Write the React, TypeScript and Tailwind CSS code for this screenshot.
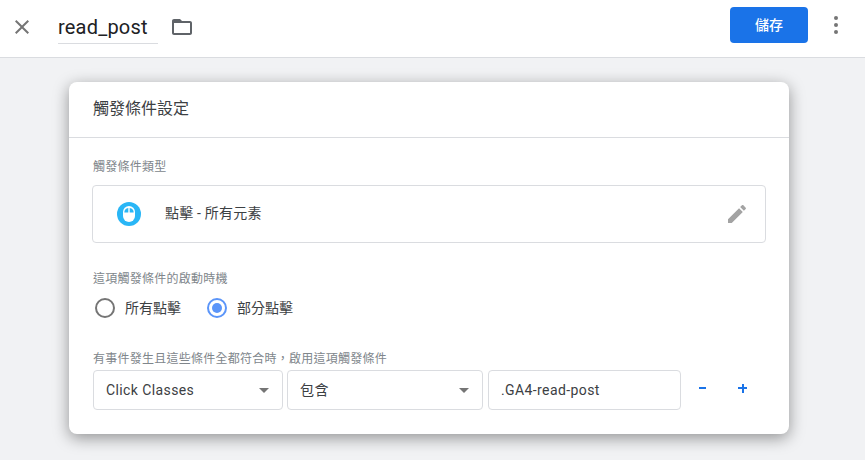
const font = { fontFamily: 'Roboto, "Noto Sans CJK TC", sans-serif' }

function Caret() {
  return <span className="w-0 h-0 border-x-[5px] border-x-transparent border-t-[5px] border-t-[#757575]" />
}

function SelectBox({ label, width }: { label: string; width: string }) {
  return (
    <div className={`${width} h-10 flex items-center justify-between pl-3 pr-[13px] bg-white border border-[#dadce0] rounded text-sm text-[#3c4043] tracking-[0.4px]`}>
      <span>{label}</span>
      <Caret />
    </div>
  )
}

function Radio({ label, checked }: { label: string; checked?: boolean }) {
  return (
    <div className="flex items-center gap-[10px]">
      <span className={`w-5 h-5 rounded-full border-2 flex items-center justify-center ${checked ? 'border-[#5b95f9]' : 'border-[#757575]'}`}>
        {checked && <span className="w-2.5 h-2.5 rounded-full bg-[#5b95f9]" />}
      </span>
      <span className="text-sm text-[#3c4043]">{label}</span>
    </div>
  )
}

export default function App() {
  return (
    <div className="w-[865px] h-[460px] overflow-hidden flex flex-col bg-[#f1f2f4]" style={font}>
      {/* Top bar */}
      <div className="h-[58px] shrink-0 flex items-center bg-white border-b border-[#dadce0]">
        <svg width="24" height="24" viewBox="0 0 24 24" fill="#757575" className="ml-[10px] mb-[4px]">
          <path d="M19 6.41L17.59 5 12 10.59 6.41 5 5 6.41 10.59 12 5 17.59 6.41 19 12 13.41 17.59 19 19 17.59 13.41 12z" />
        </svg>
        <div className="ml-[24px] w-[100px] h-[34px] mb-[3px] flex items-center text-[20px] tracking-[0.2px] text-[#202124] border-b border-[#dadce0]">
          read_post
        </div>
        <svg width="24" height="24" viewBox="0 0 24 24" fill="#5f6368" className="ml-[12px] mb-[3px]">
          <path d="M20 6h-8l-2-2H4c-1.1 0-1.99.9-1.99 2L2 18c0 1.1.9 2 2 2h16c1.1 0 2-.9 2-2V8c0-1.1-.9-2-2-2zm0 12H4V8h16v10z" />
        </svg>
        <button className="ml-auto mb-[7px] w-[78px] h-9 bg-[#1a73e8] text-white text-sm font-medium rounded">
          儲存
        </button>
        <div className="ml-[26px] mr-[27px] mb-[7px] flex flex-col gap-[3px]">
          <span className="w-1 h-1 rounded-full bg-[#757575]" />
          <span className="w-1 h-1 rounded-full bg-[#757575]" />
          <span className="w-1 h-1 rounded-full bg-[#757575]" />
        </div>
      </div>

      {/* Trigger card */}
      <div className="mt-6 ml-[69px] w-[720px] h-[352px] shrink-0 bg-white rounded-lg shadow-[0_4px_16px_rgba(0,0,0,0.4)]">
        <div className="h-[56px] flex items-center pl-[24px] pb-[2px] text-base text-[#3c4043] border-b border-[#dadce0]">
          觸發條件設定
        </div>

        <div className="pl-[23px] pr-[23px]">
          <div className="mt-[21px] ml-[1px] h-4 flex items-center text-xs tracking-[0.25px] text-[#80868b]">觸發條件類型</div>
          <div className="mt-[10px] h-[58px] flex items-center border border-[#dadce0] rounded pl-[24px] pr-[16px]">
            <svg width="24" height="24" viewBox="0 0 24 24">
              <circle cx="12" cy="12" r="12" fill="#29b6f6" />
              <rect x="6" y="4" width="12" height="16" rx="6" fill="#fff" />
              <path d="M7.3 10.5a4.7 4.7 0 0 1 4-4.6v4.6zM16.7 10.5a4.7 4.7 0 0 0-4-4.6v4.6z" fill="#29b6f6" />
            </svg>
            <span className="ml-[24px] mb-[2px] text-sm tracking-[0.2px] text-[#3c4043]">點擊 - 所有元素</span>
            <svg width="24" height="24" viewBox="0 0 24 24" fill="#a3a3a3" className="ml-auto">
              <path d="M3 17.25V21h3.75L17.81 9.94l-3.75-3.75L3 17.25zM20.71 7.04c.39-.39.39-1.02 0-1.41l-2.34-2.34c-.39-.39-1.02-.39-1.41 0l-1.83 1.83 3.75 3.75 1.83-1.83z" />
            </svg>
          </div>

          <div className="mt-[28px] ml-[1px] h-4 flex items-center text-xs tracking-[0.25px] text-[#80868b]">這項觸發條件的啟動時機</div>
          <div className="mt-[11px] flex items-center gap-[26px] ml-[3px]">
            <Radio label="所有點擊" />
            <Radio label="部分點擊" checked />
          </div>

          <div className="mt-[33px] ml-[1px] h-4 flex items-center text-xs tracking-[0.25px] text-[#80868b]">有事件發生且這些條件全都符合時{'\uFF0C'}啟用這項觸發條件</div>
          <div className="mt-[3px] ml-[1px] flex items-center gap-[4px]">
            <SelectBox label="Click Classes" width="w-[190px]" />
            <SelectBox label="包含" width="w-[196px]" />
            <div className="ml-[1px] w-[193px] h-10 flex items-center pl-3 bg-white border border-[#dadce0] rounded text-sm text-[#3c4043] tracking-[0.4px]">
              .GA4-read-post
            </div>
            <span className="ml-[14px] mb-[4px] w-[7px] h-[2px] bg-[#1a73e8]" />
            <span className="ml-[28px] mb-[4px] relative w-[9px] h-[9px]">
              <span className="absolute left-0 top-[3.5px] w-[9px] h-[2px] bg-[#1a73e8]" />
              <span className="absolute left-[3.5px] top-0 w-[2px] h-[9px] bg-[#1a73e8]" />
            </span>
          </div>
        </div>
      </div>
    </div>
  )
}
